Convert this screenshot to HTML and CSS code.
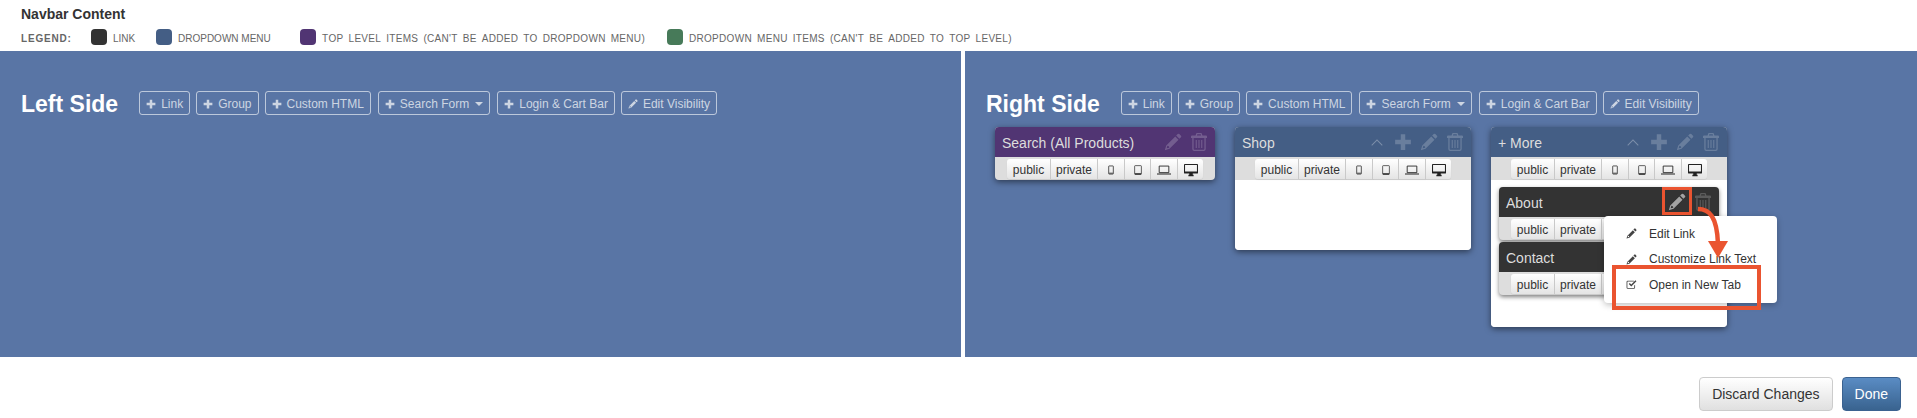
FILE: index.html
```html
<!DOCTYPE html>
<html lang="en">
<head>
  <meta charset="UTF-8">
  <title>Navbar Content</title>
  <link rel="stylesheet" href="styles.css">
</head>
<body>
  <svg class="icon-defs" width="0" height="0">
    <symbol id="i-plus" viewBox="0 0 16 16"><path d="M6 1h4v5h5v4h-5v5H6v-5H1V6h5z"/></symbol>
    <symbol id="i-pencil" viewBox="0 0 16 16"><path d="M12.2.9a1 1 0 0 1 1.4 0l1.5 1.5a1 1 0 0 1 0 1.4L13.7 5.2 10.8 2.3zM10 3.1 12.9 6l-8 8L.7 15.300l1.300-4.200zM3 11.300l-.6 2.300 2.300-.6-.5-1.200z"/></symbol>
    <symbol id="i-trash" viewBox="0 0 16 18"><path fill-rule="evenodd" d="M5.500 0h5l1 2.500H15a1 1 0 0 1 1 1V5h-1.300v11a2 2 0 0 1-2 2H3.300a2 2 0 0 1-2-2V5H0V3.500a1 1 0 0 1 1-1h3.500zM6.300 1.200l-.4 1.300h4.200l-.4-1.300zM2.600 5v11a.8.8 0 0 0 .7.800h9.400a.8.8 0 0 0 .7-.8V5zM4.700 7h1.100v8H4.700zM7.450 7h1.100v8h-1.100zM10.200 7h1.100v8h-1.100z"/></symbol>
    <symbol id="i-check" viewBox="0 0 16 16"><path d="M2.500 2.500h9v1.200h-9a.6.6 0 0 0-.5.500v8.300a.6.6 0 0 0 .5.500h9a.6.6 0 0 0 .5-.5V9.500l1.200-1.200v4.200a1.700 1.700 0 0 1-1.700 1.700h-9A1.700 1.700 0 0 1 .8 12.500V4.200a1.700 1.700 0 0 1 1.700-1.700z"/><path d="m4 7.200 1.500-1.500 2.200 2.200 6-6 1.500 1.500-7.500 7.500z"/></symbol>
    <symbol id="i-phone" viewBox="0 0 16 16"><path fill="none" stroke="currentColor" stroke-width="1.200" d="M5 1.500h6a.7.7 0 0 1 .7.700v11.600a.7.7 0 0 1-.7.700H5a.7.7 0 0 1-.7-.7V2.200a.7.7 0 0 1 .7-.7z"/><path d="M5 12.500h6v1.200H5z"/></symbol>
    <symbol id="i-tablet" viewBox="0 0 16 16"><path fill="none" stroke="currentColor" stroke-width="1.100" d="M3.600 1h8.800a1 1 0 0 1 1 1v12a1 1 0 0 1-1 1H3.600a1 1 0 0 1-1-1V2a1 1 0 0 1 1-1z"/><path d="M3 13h10v2H3z"/></symbol>
    <symbol id="i-laptop" viewBox="0 0 16 16"><path fill="none" stroke="currentColor" stroke-width="1" d="M2.500 3.500h11v7.500h-11z"/><path d="M0 12h16v1.200H0z"/></symbol>
    <symbol id="i-desktop" viewBox="0 0 16 16"><path d="M1 1h14a1 1 0 0 1 1 1v9a1 1 0 0 1-1 1H10v1.500h1V15H5v-1.500h1V12H1a1 1 0 0 1-1-1V2a1 1 0 0 1 1-1zm.2 1.200v7.600h13.600V2.200z"/></symbol>
  </svg>

  <header class="page-head">
    <h3 class="page-title">Navbar Content</h3>
    <div class="legend">
      <b class="legend-label">Legend:</b>
      <span class="swatch swatch-link"></span><span class="legend-text legend-link">Link</span>
      <span class="swatch swatch-dropdown"></span><span class="legend-text legend-dropdown">Dropdown Menu</span>
      <span class="swatch swatch-top"></span><span class="legend-text legend-long legend-top">Top Level Items (can't be added to dropdown menu)</span>
      <span class="swatch swatch-item"></span><span class="legend-text legend-long">Dropdown Menu Items (can't be added to top level)</span>
    </div>
  </header>

  <main class="panels">
    <section class="panel panel-left">
      <div class="panel-head">
        <h2>Left Side</h2>
        <a class="tool"><svg class="tool-icon"><use href="#i-plus"/></svg>Link</a>
        <a class="tool"><svg class="tool-icon"><use href="#i-plus"/></svg>Group</a>
        <a class="tool"><svg class="tool-icon"><use href="#i-plus"/></svg>Custom HTML</a>
        <a class="tool tool-menu"><svg class="tool-icon"><use href="#i-plus"/></svg>Search Form<span class="caret"></span></a>
        <a class="tool"><svg class="tool-icon"><use href="#i-plus"/></svg>Login &amp; Cart Bar</a>
        <a class="tool"><svg class="tool-icon"><use href="#i-pencil"/></svg>Edit Visibility</a>
      </div>
    </section>

    <section class="panel panel-right">
      <div class="panel-head">
        <h2>Right Side</h2>
        <a class="tool"><svg class="tool-icon"><use href="#i-plus"/></svg>Link</a>
        <a class="tool"><svg class="tool-icon"><use href="#i-plus"/></svg>Group</a>
        <a class="tool"><svg class="tool-icon"><use href="#i-plus"/></svg>Custom HTML</a>
        <a class="tool tool-menu"><svg class="tool-icon"><use href="#i-plus"/></svg>Search Form<span class="caret"></span></a>
        <a class="tool"><svg class="tool-icon"><use href="#i-plus"/></svg>Login &amp; Cart Bar</a>
        <a class="tool"><svg class="tool-icon"><use href="#i-pencil"/></svg>Edit Visibility</a>
      </div>

      <div class="cards">
        <!-- Search -->
        <div class="card card-top card-short">
          <div class="card-head">
            <span class="card-name">Search (All Products)</span>
            <svg class="act"><use href="#i-pencil"/></svg>
            <svg class="act"><use href="#i-trash"/></svg>
          </div>
          <div class="vis">
            <span class="vis-btn vis-public">public</span><span class="vis-btn vis-private">private</span><span class="vis-btn vis-phone"><svg><use href="#i-phone"/></svg></span><span class="vis-btn vis-tablet"><svg><use href="#i-tablet"/></svg></span><span class="vis-btn vis-laptop"><svg><use href="#i-laptop"/></svg></span><span class="vis-btn vis-desktop"><svg><use href="#i-desktop"/></svg></span>
          </div>
        </div>

        <!-- Shop -->
        <div class="card card-dropdown">
          <div class="card-head">
            <span class="card-name">Shop</span>
            <span class="chev"></span>
            <svg class="act"><use href="#i-plus"/></svg>
            <svg class="act"><use href="#i-pencil"/></svg>
            <svg class="act"><use href="#i-trash"/></svg>
          </div>
          <div class="vis">
            <span class="vis-btn vis-public">public</span><span class="vis-btn vis-private">private</span><span class="vis-btn vis-phone"><svg><use href="#i-phone"/></svg></span><span class="vis-btn vis-tablet"><svg><use href="#i-tablet"/></svg></span><span class="vis-btn vis-laptop"><svg><use href="#i-laptop"/></svg></span><span class="vis-btn vis-desktop"><svg><use href="#i-desktop"/></svg></span>
          </div>
          <div class="card-body card-body-empty"></div>
        </div>

        <!-- More -->
        <div class="card card-dropdown">
          <div class="card-head">
            <span class="card-name">+ More</span>
            <span class="chev"></span>
            <svg class="act"><use href="#i-plus"/></svg>
            <svg class="act"><use href="#i-pencil"/></svg>
            <svg class="act"><use href="#i-trash"/></svg>
          </div>
          <div class="vis">
            <span class="vis-btn vis-public">public</span><span class="vis-btn vis-private">private</span><span class="vis-btn vis-phone"><svg><use href="#i-phone"/></svg></span><span class="vis-btn vis-tablet"><svg><use href="#i-tablet"/></svg></span><span class="vis-btn vis-laptop"><svg><use href="#i-laptop"/></svg></span><span class="vis-btn vis-desktop"><svg><use href="#i-desktop"/></svg></span>
          </div>
          <div class="card-body">
            <div class="card card-link">
              <div class="card-head">
                <span class="card-name">About</span>
                <svg class="act act-on"><use href="#i-pencil"/></svg>
                <svg class="act"><use href="#i-trash"/></svg>
              </div>
              <div class="vis">
                <span class="vis-btn vis-public">public</span><span class="vis-btn vis-private">private</span><span class="vis-btn vis-phone"><svg><use href="#i-phone"/></svg></span><span class="vis-btn vis-tablet"><svg><use href="#i-tablet"/></svg></span><span class="vis-btn vis-laptop"><svg><use href="#i-laptop"/></svg></span><span class="vis-btn vis-desktop"><svg><use href="#i-desktop"/></svg></span>
              </div>
            </div>
            <div class="card card-link">
              <div class="card-head">
                <span class="card-name">Contact</span>
                <svg class="act"><use href="#i-pencil"/></svg>
                <svg class="act"><use href="#i-trash"/></svg>
              </div>
              <div class="vis">
                <span class="vis-btn vis-public">public</span><span class="vis-btn vis-private">private</span><span class="vis-btn vis-phone"><svg><use href="#i-phone"/></svg></span><span class="vis-btn vis-tablet"><svg><use href="#i-tablet"/></svg></span><span class="vis-btn vis-laptop"><svg><use href="#i-laptop"/></svg></span><span class="vis-btn vis-desktop"><svg><use href="#i-desktop"/></svg></span>
              </div>
            </div>
          </div>
        </div>
      </div>

      <!-- Popup menu and the orange annotations lie over the cards -->
      <ul class="popup">
        <li><svg><use href="#i-pencil"/></svg>Edit Link</li>
        <li><svg><use href="#i-pencil"/></svg>Customize Link Text</li>
        <li><svg><use href="#i-check"/></svg>Open in New Tab</li>
      </ul>
      <div class="mark mark-pencil"></div>
      <div class="mark mark-item"></div>
      <svg class="arrow" width="40" height="60" viewBox="0 0 40 60">
        <path d="M1 3C12 3 20 10 21 38" fill="none" stroke="#ea5430" stroke-width="4.500"/>
        <path d="M11 35h20L21 52z" fill="#ea5430"/>
      </svg>
    </section>
  </main>

  <footer class="page-foot">
    <a class="btn">Discard Changes</a>
    <a class="btn btn-primary">Done</a>
  </footer>
</body>
</html>
```

FILE: styles.css
```css
html, body {
  margin: 0;
  padding: 0;
}
body {
  font-family: 'Liberation Sans', Arial, sans-serif;
  font-size: 12px;
  color: #333;
  background-color: #fff;
  overflow: hidden;
}
.icon-defs {
  position: absolute;
}
.page-head {
  height: 51px;
  padding-left: 21px;
  box-sizing: border-box;
  overflow: hidden;
}
.page-title {
  margin: 6px 0 0;
  font-size: 14px;
  line-height: 16px;
  font-weight: bold;
  color: #333;
}
.legend {
  display: flex;
  align-items: center;
  height: 16px;
  margin-top: 7px;
  color: #666;
  font-variant: all-small-caps;
  font-size: 14px;
  white-space: nowrap;
}
.legend-label {
  width: 70px;
  letter-spacing: 0.8px;
  padding-bottom: 1px;
}
.legend-text {
  padding-bottom: 1px;
}
.legend-long {
  letter-spacing: 0.3px;
  word-spacing: 2px;
}
.swatch {
  width: 16px;
  height: 16px;
  border-radius: 4px;
  margin-right: 6px;
}
.swatch-link { background-color: #333; }
.swatch-dropdown { background-color: #445e85; }
.swatch-top { background-color: #513573; }
.swatch-item { background-color: #477a59; }
.legend-link { width: 43px; }
.legend-dropdown { width: 122px; }
.legend-top { width: 345px; }

.panels {
  display: flex;
  gap: 4px;
  height: 306px;
}
.panel {
  background-color: #5975a5;
  padding: 40px 0 0 21px;
  box-sizing: border-box;
  position: relative;
}
.panel-left {
  width: 961px;
}
.panel-right {
  flex: 1;
}
.panel-head {
  display: flex;
  align-items: center;
  gap: 6px;
  height: 24px;
}
.panel-head h2 {
  margin: 2px 15px 0 0;
  font-size: 23px;
  line-height: 28px;
  font-weight: bold;
  color: #fff;
}
.tool {
  display: flex;
  align-items: center;
  height: 24px;
  box-sizing: border-box;
  padding: 1px 6px 0;
  border: 1px solid rgba(255, 255, 255, 0.6);
  border-radius: 3px;
  color: #cdd5e2;
  white-space: nowrap;
}
.tool-menu {
  margin: 0 1px;
}
.tool-icon {
  width: 10px;
  height: 10px;
  margin-right: 5px;
  fill: #cdd5e2;
}
.caret {
  width: 0;
  height: 0;
  margin-left: 6px;
  border-top: 4px solid #cdd5e2;
  border-left: 4px solid transparent;
  border-right: 4px solid transparent;
}

.cards {
  display: flex;
  align-items: flex-start;
  gap: 20px;
  margin: 12px 0 0 9px;
}
.card {
  width: 236px;
  border-radius: 4px;
  overflow: hidden;
  background-color: #ddd;
  box-shadow: 0 2px 6px rgba(0, 0, 0, 0.5);
}
.card-short,
.card-link {
  width: 220px;
}
.card-head {
  display: flex;
  align-items: center;
  height: 30px;
  padding: 0 3px 0 7px;
  color: #ddd;
  font-size: 14px;
}
.card-top .card-head { background-color: #513573; }
.card-dropdown > .card-head { background-color: #445e85; }
.card-link .card-head { background-color: #333; }
.card-name {
  flex: 1;
  padding-top: 1px;
}
.act {
  width: 18px;
  height: 18px;
  padding: 0 4px;
  fill: rgba(255, 255, 255, 0.2);
}
.act-on {
  fill: rgba(255, 255, 255, 0.55);
}
.chev {
  width: 7px;
  height: 7px;
  margin: 5px 9px 0 0;
  border-top: 1px solid rgba(255, 255, 255, 0.3);
  border-left: 1px solid rgba(255, 255, 255, 0.3);
  transform: rotate(45deg);
}
.vis {
  display: flex;
  justify-content: center;
  height: 23px;
  box-sizing: border-box;
  padding-top: 2px;
}
.vis-btn {
  display: flex;
  align-items: center;
  justify-content: center;
  height: 20px;
  box-sizing: border-box;
  padding-top: 1px;
  border-right: 1px solid #ccc;
  background: linear-gradient(#fff, #e4e4e4);
  box-shadow: 0 1px 1px rgba(0, 0, 0, 0.08);
  color: #333;
  font-size: 12px;
}
.vis-btn svg {
  width: 14px;
  height: 14px;
  fill: #222;
  color: #222;
}
.vis-phone svg,
.vis-tablet svg {
  width: 10px;
  height: 10px;
}
.vis-public { width: 44px; border-radius: 3px 0 0 3px; }
.vis-private { width: 47px; }
.vis-phone { width: 27px; }
.vis-tablet { width: 26px; }
.vis-laptop { width: 27px; }
.vis-desktop { width: 25px; border-right: none; border-radius: 0 3px 3px 0; }
.card-body {
  background-color: #fff;
  padding: 7px 8px 32px;
}
.card-body-empty {
  height: 70px;
  padding: 0;
}
.card-body .card {
  box-shadow: 0 2px 4px rgba(0, 0, 0, 0.5);
  margin-bottom: 2px;
}
.card-body .card:last-child {
  margin-bottom: 0;
}

.popup {
  position: absolute;
  left: 639px;
  top: 165px;
  width: 173px;
  margin: 0;
  padding: 5px 0;
  list-style: none;
  box-sizing: border-box;
  background-color: #fff;
  border-radius: 4px;
  box-shadow: 0 2px 6px rgba(0, 0, 0, 0.25);
}
.popup li {
  display: flex;
  align-items: center;
  height: 25.5px;
  padding-left: 22px;
  color: #333;
}
.popup svg {
  width: 11px;
  height: 11px;
  margin-right: 12px;
  fill: #444;
}
.mark {
  position: absolute;
  box-sizing: border-box;
  border: 3px solid #ea5430;
}
.mark-pencil {
  left: 697px;
  top: 136px;
  width: 30px;
  height: 28px;
}
.mark-item {
  left: 647px;
  top: 214px;
  width: 149px;
  height: 45px;
  border-width: 4px;
}
.arrow {
  position: absolute;
  left: 732px;
  top: 155px;
}

.page-foot {
  display: flex;
  justify-content: flex-end;
  gap: 9px;
  padding: 20px 16px 0 0;
}
.btn {
  display: flex;
  align-items: center;
  height: 34px;
  box-sizing: border-box;
  padding: 0 12px;
  border: 1px solid #ccc;
  border-radius: 4px;
  background: linear-gradient(#fff, #e0e0e0);
  font-size: 14px;
  color: #333;
}
.btn-primary {
  border-color: #3b6290;
  background: linear-gradient(#5a8cc4, #39638f);
  color: #fff;
}
```
